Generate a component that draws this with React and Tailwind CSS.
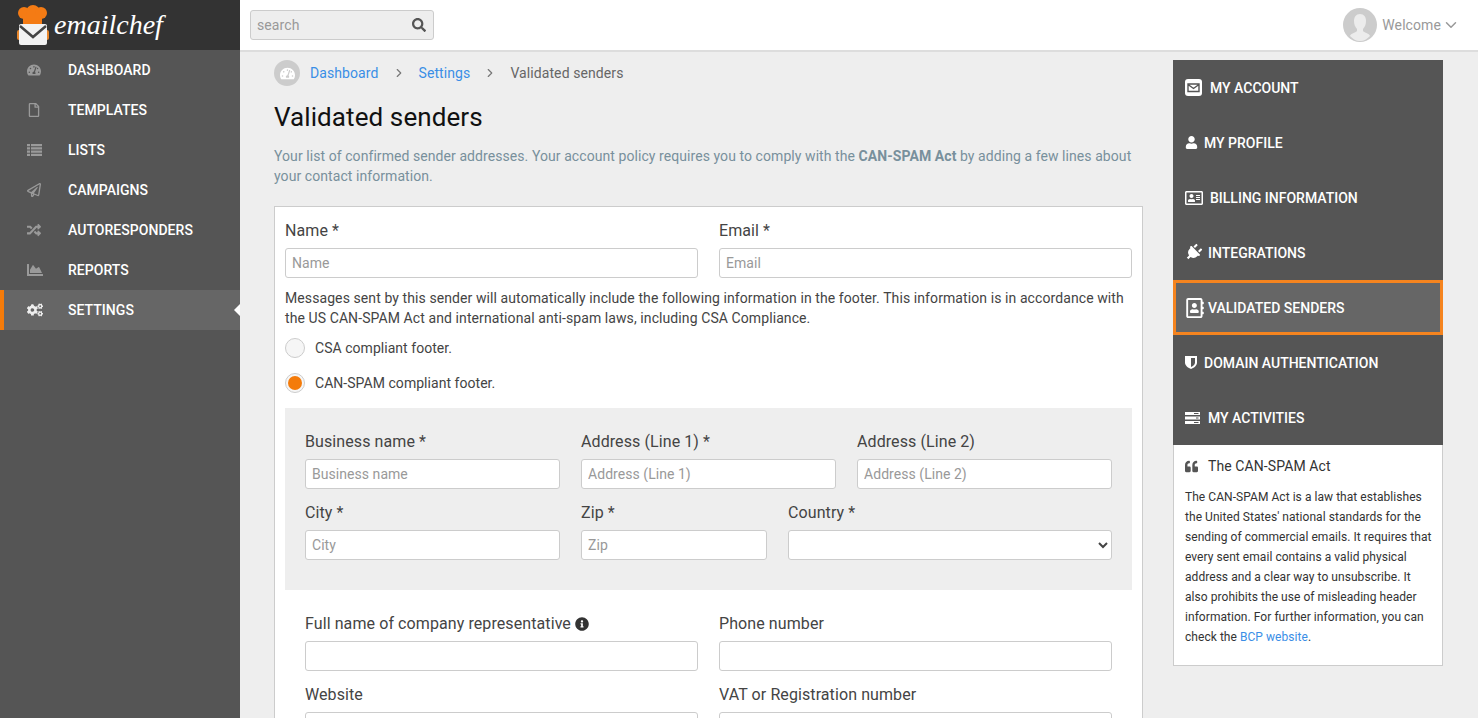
import React from "react";
import {
  FaTachometerAlt,
  FaRegFile,
  FaRegPaperPlane,
  FaRandom,
  FaChartArea,
  FaCogs,
  FaUser,
  FaRegAddressCard,
  FaPlug,
  FaRegAddressBook,
  FaQuoteLeft,
  FaInfoCircle,
  FaSearch,
} from "react-icons/fa";
import { FiChevronDown, FiChevronRight } from "react-icons/fi";

const ListIcon = () => (
  <svg width="15" height="12" viewBox="0 0 15 12" fill="currentColor">
    <path d="M0 0h3v2.200H0zM4 0h11v2.200H4zM0 3.300h3v2.200H0zM4 3.300h11v2.200H4zM0 6.600h3v2.200H0zM4 6.600h11v2.200H4zM0 9.800h3V12H0zM4 9.800h11V12H4z" />
  </svg>
);

const MailIcon = () => (
  <svg width="17" height="17" viewBox="0 0 17 17">
    <rect width="17" height="17" rx="3" fill="#fff" />
    <path d="M3 5h11v7.500H3zM3 5.500l5.500 4 5.500-4" fill="none" stroke="#555" strokeWidth="1.400" />
  </svg>
);

const ShieldIcon = () => (
  <svg width="12" height="13" viewBox="0 0 12 13">
    <path d="M0 0h12v6.500C12 10 8.500 12 6 13 3.500 12 0 10 0 6.500z" fill="#fff" />
    <path d="M6 2h4v4.500C10 8.500 8 10 6 11z" fill="#555" />
  </svg>
);

const RowsIcon = () => (
  <svg width="15" height="12" viewBox="0 0 15 12" fill="#fff">
    <path d="M0 0h15v3H0zM0 4.500h15v3H0zM0 9h15v3H0z" />
    <path d="M9 1h4.500v1H9zM11 5.500h2.500v1H11zM9 10h4.500v1H9z" fill="#555" />
  </svg>
);

const sideItems = [
  { label: "DASHBOARD", icon: <FaTachometerAlt size={14} /> },
  { label: "TEMPLATES", icon: <FaRegFile size={14} /> },
  { label: "LISTS", icon: <ListIcon /> },
  { label: "CAMPAIGNS", icon: <FaRegPaperPlane size={14} /> },
  { label: "AUTORESPONDERS", icon: <FaRandom size={14} /> },
  { label: "REPORTS", icon: <FaChartArea size={16} /> },
  { label: "SETTINGS", icon: <FaCogs size={16} />, active: true },
];

const accountItems = [
  { label: "MY ACCOUNT", icon: <MailIcon />, w: "w-[25px]" },
  { label: "MY PROFILE", icon: <FaUser size={13} />, w: "w-[19px]" },
  { label: "BILLING INFORMATION", icon: <FaRegAddressCard size={18} />, w: "w-[25px]" },
  { label: "INTEGRATIONS", icon: <FaPlug size={17} className="rotate-45" />, w: "w-[23px]" },
  { label: "VALIDATED SENDERS", icon: <FaRegAddressBook size={20} />, w: "w-[23px]", active: true },
  { label: "DOMAIN AUTHENTICATION", icon: <ShieldIcon />, w: "w-[19px]" },
  { label: "MY ACTIVITIES", icon: <RowsIcon />, w: "w-[23px]" },
];

const Logo = () => (
  <svg width="34" height="42" viewBox="0 0 34 42">
    <circle cx="8" cy="9" r="6" fill="#f47b14" />
    <circle cx="17" cy="8" r="7" fill="#f47b14" />
    <circle cx="25" cy="9" r="6" fill="#f47b14" />
    <rect x="7" y="10" width="19" height="10" fill="#f47b14" />
    <rect x="1" y="26" width="5" height="10" rx="2" fill="#e8872c" />
    <rect x="28" y="26" width="5" height="10" rx="2" fill="#e8872c" />
    <rect x="3" y="20" width="28" height="21" rx="2" fill="#f2f2f2" />
    <path d="M4 22l13 11 13-11" fill="none" stroke="#444" strokeWidth="2.500" />
  </svg>
);

const Field = ({ label, placeholder, className = "", info }) => (
  <div className={className}>
    <label className="flex items-center h-6 pt-[2px] text-base text-[#444]">
      {label}
      {info && <FaInfoCircle size={14} className="ml-[4px] text-[#333]" />}
    </label>
    <input
      placeholder={placeholder}
      className="mt-[6px] block w-full h-[30px] px-[6px] bg-white border border-[#ccc] rounded-[3px] text-sm tracking-[0.05px] placeholder:text-[#999] outline-none"
    />
  </div>
);

const Radio = ({ label, checked }) => (
  <div className="flex items-center h-[35px]">
    <span className="flex items-center justify-center w-5 h-5 rounded-full border border-[#ccc] bg-[#f6f6f6]">
      {checked && <span className="w-[14px] h-[14px] rounded-full bg-[#f47b0a]" />}
    </span>
    <span className="ml-[10px] text-sm tracking-[0.04px] text-[#444]">{label}</span>
  </div>
);

export default function App() {
  return (
    <div className="flex h-[718px] overflow-hidden bg-[#eee] font-['Roboto',sans-serif] tracking-[0.09px] text-[#444]">
      {/* sidebar */}
      <aside className="w-[240px] shrink-0 bg-[#555]">
        <div className="flex items-center h-[50px] pl-[16px] bg-[#333]">
          <Logo />
          <span className="ml-[4px] font-['Liberation_Serif',serif] italic text-[28px] tracking-normal leading-none text-white">
            emailchef
          </span>
        </div>
        <nav>
          {sideItems.map((item) => (
            <div
              key={item.label}
              className={
                "relative flex items-center h-10 text-sm font-medium tracking-[0.04px] text-white " +
                (item.active ? "bg-[#666] border-l-4 border-[#f47b0a] pl-[23px]" : "pl-[27px]")
              }
            >
              <span className={"w-[41px] " + (item.active ? "text-[#eee]" : "text-[#9a9a9a]")}>{item.icon}</span>
              {item.label}
              {item.active && (
                <span className="absolute right-0 top-[14px] border-y-[6px] border-r-[6px] border-y-transparent border-r-white" />
              )}
            </div>
          ))}
        </nav>
      </aside>

      <div className="flex-1 min-w-0">
        {/* top bar */}
        <header className="flex items-center justify-between h-[52px] pl-[10px] pr-[18px] bg-white border-b-2 border-[#ddd]">
          <div className="flex items-center justify-between w-[184px] h-[30px] px-[6px] bg-[#eee] border border-[#ccc] rounded-[3px] text-sm text-[#999]">
            search
            <FaSearch size={14} className="mr-[1px] text-[#555]" />
          </div>
          <div className="flex items-center text-sm text-[#999]">
            <svg width="34" height="34" viewBox="0 0 34 34">
              <circle cx="17" cy="17" r="17" fill="#ccc" />
              <path
                d="M17 6c-4 0-6 3-6 7 0 3 1 6 3 8v2c-2 2-6 2-7 5 3 3 6 5 10 5s7-2 10-5c-1-3-5-3-7-5v-2c2-2 3-5 3-8 0-4-2-7-6-7z"
                fill="#ececec"
              />
            </svg>
            <span className="ml-[5px]">Welcome</span>
            <FiChevronDown size={18} className="ml-[1px]" />
          </div>
        </header>

        <div className="flex pl-[34px]">
          {/* main column */}
          <main className="w-[869px] shrink-0">
            <div className="flex items-center h-[26px] mt-[8px] text-sm">
              <span className="flex items-center justify-center w-[26px] h-[26px] rounded-full bg-[#ccc] text-white">
                <FaTachometerAlt size={15} />
              </span>
              <a className="ml-[10px] text-[#3a8ee6]">Dashboard</a>
              <FiChevronRight size={14} className="mx-[13px] text-[#777]" />
              <a className="text-[#3a8ee6]">Settings</a>
              <FiChevronRight size={14} className="mx-[13px] text-[#777]" />
              <span className="text-[#666]">Validated senders</span>
            </div>
            <h1 className="mt-[13px] text-[26px] leading-[36px] text-[#111]">Validated senders</h1>
            <p className="mt-[11px] text-sm leading-5 tracking-[0.07px] text-[#78909c]">
              Your list of confirmed sender addresses. Your account policy requires you to comply with the{" "}
              <b className="font-bold">CAN-SPAM Act</b> by adding a few lines about your contact information.
            </p>

            <section className="mt-5 p-[10px] pt-[11px] bg-white border border-[#ccc]">
              <div className="grid grid-cols-2 gap-x-[21px]">
                <Field label="Name *" placeholder="Name" />
                <Field label="Email *" placeholder="Email" />
              </div>
              <p className="mt-[10px] text-sm leading-5 text-[#444]">
                Messages sent by this sender will automatically include the following information in the footer. This
                information is in accordance with the US CAN-SPAM Act and international anti-spam laws, including CSA
                Compliance.
              </p>
              <div className="mt-[2px]">
                <Radio label="CSA compliant footer." />
                <Radio label="CAN-SPAM compliant footer." checked />
              </div>

              <div className="mt-[8px] px-5 pt-[21px] pb-[30px] bg-[#eee]">
                <div className="grid grid-cols-3 gap-x-[21px]">
                  <Field label="Business name *" placeholder="Business name" />
                  <Field label="Address (Line 1) *" placeholder="Address (Line 1)" />
                  <Field label="Address (Line 2)" placeholder="Address (Line 2)" />
                </div>
                <div className="flex gap-x-[21px] mt-[11px]">
                  <Field label="City *" placeholder="City" className="w-[255px]" />
                  <Field label="Zip *" placeholder="Zip" className="w-[186px]" />
                  <div className="flex-1">
                    <label className="flex items-center h-6 pt-[2px] text-base text-[#444]">Country *</label>
                    <select className="mt-[6px] block w-full h-[30px] bg-white border border-[#ccc] rounded-[3px] text-sm" />
                  </div>
                </div>
              </div>

              <div className="grid grid-cols-2 gap-x-[21px] gap-y-[11px] mt-[21px] px-5">
                <Field label="Full name of company representative" info />
                <Field label="Phone number" />
                <Field label="Website" />
                <Field label="VAT or Registration number" />
              </div>
            </section>
          </main>

          {/* account menu */}
          <div className="w-[270px] shrink-0 ml-[30px] mt-[8px]">
            <nav className="bg-[#555]">
              {accountItems.map((item) => (
                <div
                  key={item.label}
                  className={
                    "flex items-center h-[55px] text-sm font-medium tracking-normal text-white " +
                    (item.active ? "bg-[#666] border-[3px] border-[#f5841f] pl-[9px]" : "pl-3")
                  }
                >
                  <span className={"shrink-0 " + item.w}>{item.icon}</span>
                  {item.label}
                </div>
              ))}
            </nav>
            <div className="h-[221px] pl-[11px] pr-[8px] pt-[11px] bg-white border border-t-0 border-[#ccc]">
              <div className="flex items-center h-5 text-sm text-[#333]">
                <FaQuoteLeft size={13} className="mr-[10px] text-[#555]" />
                The CAN-SPAM Act
              </div>
              <p className="mt-[11px] text-xs leading-5 tracking-[0.05px] text-[#333]">
                The CAN-SPAM Act is a law that establishes the United States' national standards for the sending of
                commercial emails. It requires that every sent email contains a valid physical address and a clear way
                to unsubscribe. It also prohibits the use of misleading header information. For further information, you
                can check the <a className="text-[#3a8ee6]">BCP website</a>.
              </p>
            </div>
          </div>
        </div>
      </div>
    </div>
  );
}
